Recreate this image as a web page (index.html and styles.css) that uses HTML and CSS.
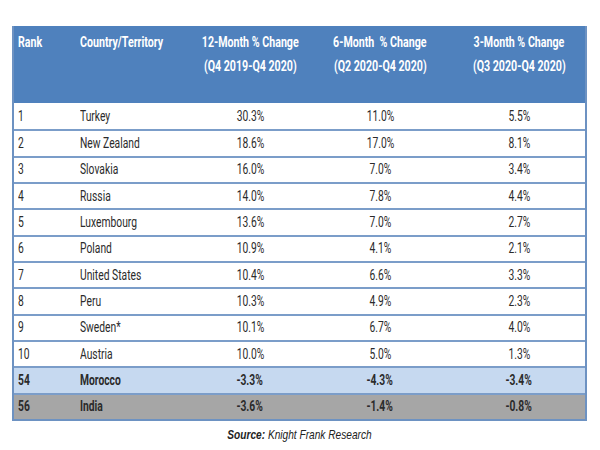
FILE: index.html
```html
<!DOCTYPE html>
<html>
<head>
<meta charset="utf-8">
<link rel="stylesheet" href="styles.css">
</head>
<body>
<div class="page">
  <div class="table">
    <div class="row head">
      <div class="cell left"><span>Rank</span></div>
      <div class="cell left"><span>Country/Territory</span></div>
      <div class="cell"><span>12-Month % Change</span><span>(Q4 2019-Q4 2020)</span></div>
      <div class="cell"><span>6-Month &nbsp;% Change</span><span>(Q2 2020-Q4 2020)</span></div>
      <div class="cell"><span>3-Month % Change</span><span>(Q3 2020-Q4 2020)</span></div>
    </div>
    <div class="row first"><div class="cell left"><span>1</span></div><div class="cell left"><span>Turkey</span></div><div class="cell"><span>30.3%</span></div><div class="cell"><span>11.0%</span></div><div class="cell"><span>5.5%</span></div></div>
    <div class="row"><div class="cell left"><span>2</span></div><div class="cell left"><span>New Zealand</span></div><div class="cell"><span>18.6%</span></div><div class="cell"><span>17.0%</span></div><div class="cell"><span>8.1%</span></div></div>
    <div class="row"><div class="cell left"><span>3</span></div><div class="cell left"><span>Slovakia</span></div><div class="cell"><span>16.0%</span></div><div class="cell"><span>7.0%</span></div><div class="cell"><span>3.4%</span></div></div>
    <div class="row"><div class="cell left"><span>4</span></div><div class="cell left"><span>Russia</span></div><div class="cell"><span>14.0%</span></div><div class="cell"><span>7.8%</span></div><div class="cell"><span>4.4%</span></div></div>
    <div class="row"><div class="cell left"><span>5</span></div><div class="cell left"><span>Luxembourg</span></div><div class="cell"><span>13.6%</span></div><div class="cell"><span>7.0%</span></div><div class="cell"><span>2.7%</span></div></div>
    <div class="row"><div class="cell left"><span>6</span></div><div class="cell left"><span>Poland</span></div><div class="cell"><span>10.9%</span></div><div class="cell"><span>4.1%</span></div><div class="cell"><span>2.1%</span></div></div>
    <div class="row"><div class="cell left"><span>7</span></div><div class="cell left"><span>United States</span></div><div class="cell"><span>10.4%</span></div><div class="cell"><span>6.6%</span></div><div class="cell"><span>3.3%</span></div></div>
    <div class="row"><div class="cell left"><span>8</span></div><div class="cell left"><span>Peru</span></div><div class="cell"><span>10.3%</span></div><div class="cell"><span>4.9%</span></div><div class="cell"><span>2.3%</span></div></div>
    <div class="row"><div class="cell left"><span>9</span></div><div class="cell left"><span>Sweden*</span></div><div class="cell"><span>10.1%</span></div><div class="cell"><span>6.7%</span></div><div class="cell"><span>4.0%</span></div></div>
    <div class="row"><div class="cell left"><span>10</span></div><div class="cell left"><span>Austria</span></div><div class="cell"><span>10.0%</span></div><div class="cell"><span>5.0%</span></div><div class="cell"><span>1.3%</span></div></div>
    <div class="row hl-blue"><div class="cell left"><span>54</span></div><div class="cell left"><span>Morocco</span></div><div class="cell"><span>-3.3%</span></div><div class="cell"><span>-4.3%</span></div><div class="cell"><span>-3.4%</span></div></div>
    <div class="row hl-grey"><div class="cell left"><span>56</span></div><div class="cell left"><span>India</span></div><div class="cell"><span>-3.6%</span></div><div class="cell"><span>-1.4%</span></div><div class="cell"><span>-0.8%</span></div></div>
  </div>
  <p class="source"><b>Source:</b> Knight Frank Research</p>
</div>
</body>
</html>
```

FILE: styles.css
```css
html, body {
  margin: 0;
  padding: 0;
  background: #ffffff;
  overflow: hidden;
}
.page {
  padding: 26px 0 0 12px;
  width: 575px;
}
.table {
  width: 575px;
  box-sizing: border-box;
  border-left: 2px solid #6d92c2;
  border-right: 2px solid #6d92c2;
  border-bottom: 2px solid #6d92c2;
  font-family: "Roboto", "Liberation Sans", sans-serif;
  font-size: 14.5px;
  color: #2b2b2b;
}
.row {
  display: grid;
  grid-template-columns: 62px 117px 114px 146px 132px;
  height: 26.33px;
  box-sizing: border-box;
  border-top: 2px solid #7b9dc9;
}
.row.first { border-top: none; }
.row.head {
  height: 77px;
  border-top: none;
  background: #4f81bd;
  color: #ffffff;
  font-weight: bold;
  font-size: 15px;
  line-height: 24px;
  padding-top: 4px;
}
.cell {
  display: flex;
  align-items: center;
  justify-content: center;
  white-space: nowrap;
  min-width: 0;
}
.cell span {
  display: inline-block;
  transform: scaleX(0.71);
  transform-origin: 50% 50%;
}
.cell.left {
  justify-content: flex-start;
  padding-left: 4px;
}
.cell.left span { transform-origin: 0 50%; }
.head .cell {
  flex-direction: column;
  justify-content: flex-start;
  align-items: center;
}
.head .cell.left { align-items: flex-start; }
.hl-blue { background: #c6d9f0; font-weight: bold; }
.hl-grey { background: #a6a6a6; font-weight: bold; }
.source {
  margin: 6px 0 0 0;
  text-align: center;
  font-family: "Liberation Sans", Arial, sans-serif;
  font-style: italic;
  font-size: 13px;
  color: #222222;
  transform: scaleX(0.78);
  transform-origin: 50% 0;
}
```
